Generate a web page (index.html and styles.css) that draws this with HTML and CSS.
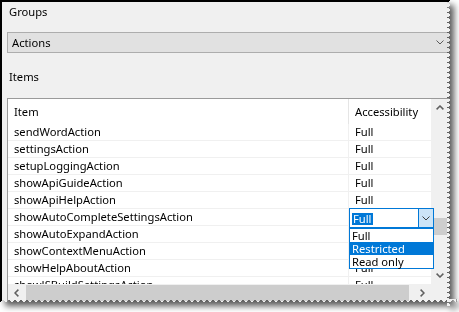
FILE: index.html
```html
<!DOCTYPE html>
<html>
<head>
<meta charset="utf-8">
<title>Groups</title>
<link rel="stylesheet" href="styles.css">
</head>
<body>
<div class="shot">
  <div class="win">
    <div class="label">Groups</div>
    <div class="combo">
      <span class="combo-text">Actions</span>
      <svg class="chev" width="8" height="5" viewBox="0 0 8 5"><path d="M0.5 0.5L4 4L7.5 0.5" fill="none" stroke="#5a5a5a" stroke-width="1"/></svg>
    </div>
    <div class="label items-label">Items</div>
    <div class="listbox">
      <div class="view">
        <div class="hdr"><div class="c1">Item</div><div class="c2">Accessibility</div></div>
        <div class="row"><div class="c1">sendWordAction</div><div class="c2">Full</div></div>
        <div class="row"><div class="c1">settingsAction</div><div class="c2">Full</div></div>
        <div class="row"><div class="c1">setupLoggingAction</div><div class="c2">Full</div></div>
        <div class="row"><div class="c1">showApiGuideAction</div><div class="c2">Full</div></div>
        <div class="row"><div class="c1">showApiHelpAction</div><div class="c2">Full</div></div>
        <div class="row"><div class="c1">showAutoCompleteSettingsAction</div><div class="c2"></div></div>
        <div class="row"><div class="c1">showAutoExpandAction</div><div class="c2"></div></div>
        <div class="row"><div class="c1">showContextMenuAction</div><div class="c2"></div></div>
        <div class="row"><div class="c1">showHelpAboutAction</div><div class="c2">Full</div></div>
        <div class="row"><div class="c1">showJSBuildSettingsAction</div><div class="c2">Full</div></div>
      </div>
      <div class="vscroll">
        <div class="sbtn"><svg width="8" height="5" viewBox="0 0 8 5"><path d="M0.6 4.4L4 1L7.4 4.4" fill="none" stroke="#606060" stroke-width="1.5"/></svg></div>
        <div class="vtrack"><div class="vthumb"></div></div>
        <div class="sbtn"><svg width="8" height="5" viewBox="0 0 8 5"><path d="M0.6 0.6L4 4L7.4 0.6" fill="none" stroke="#606060" stroke-width="1.5"/></svg></div>
      </div>
      <div class="hscroll">
        <div class="sbtn"><svg width="5" height="8" viewBox="0 0 5 8"><path d="M4.4 0.6L1 4L4.4 7.4" fill="none" stroke="#606060" stroke-width="1.5"/></svg></div>
        <div class="htrack"><div class="hthumb"></div></div>
        <div class="sbtn"><svg width="5" height="8" viewBox="0 0 5 8"><path d="M0.6 0.6L4 4L0.6 7.4" fill="none" stroke="#606060" stroke-width="1.5"/></svg></div>
      </div>
      <div class="corner"></div>
    </div>

    <div class="editor">
      <span class="ed-text"><span class="sel">Full</span></span>
      <span class="ed-btn"><svg width="8" height="5" viewBox="0 0 8 5"><path d="M0.5 0.5L4 4L7.5 0.5" fill="none" stroke="#404040" stroke-width="1"/></svg></span>
    </div>
    <div class="popup">
      <div class="opt">Full</div>
      <div class="opt hl">Restricted</div>
      <div class="opt">Read only</div>
    </div>
  </div>
</div>
</body>
</html>
```

FILE: styles.css
```css
html, body {
  margin: 0;
  padding: 0;
  background: #fff;
}
body {
  font-family: "Noto Sans", "Open Sans", sans-serif;
  font-size: 11.2px;
  color: #000;
}
.shot {
  width: 459px;
  height: 312px;
  filter: drop-shadow(5px 5px 3px rgba(0, 0, 0, 0.65));
}
.win {
  position: relative;
  box-sizing: border-box;
  width: 458px;
  height: 306px;
  overflow: hidden;
  background: #f0f0f0;
  border-top: 2px solid #000;
  border-left: 2px solid #000;
  padding: 2px 0 0 5px;
  -webkit-mask:
    linear-gradient(#000 0 0) 0 0 / 447px 299px no-repeat,
    conic-gradient(from 58deg at left, #0000 64deg, #000 0) 447px 0 / 4px 5px repeat-y,
    conic-gradient(from 135deg at top, #0000 90deg, #000 0) 0 299px / 6px 3px repeat-x;
  mask:
    linear-gradient(#000 0 0) 0 0 / 447px 299px no-repeat,
    conic-gradient(from 58deg at left, #0000 64deg, #000 0) 447px 0 / 4px 5px repeat-y,
    conic-gradient(from 135deg at top, #0000 90deg, #000 0) 0 299px / 6px 3px repeat-x;
}
.label {
  line-height: 16px;
  height: 16px;
  padding-left: 2px;
}
.combo {
  box-sizing: border-box;
  margin-top: 12px;
  width: 446px;
  height: 21px;
  border: 1px solid #adadad;
  background: #e1e1e1;
  display: flex;
  align-items: center;
  padding: 0 8px 0 4px;
}
.combo-text {
  flex: 1;
  line-height: 19px;
}
.chev {
  display: block;
}
.items-label {
  margin-top: 16px;
}
.listbox {
  margin-top: 13px;
  width: 450px;
  height: 220px;
  box-sizing: border-box;
  border: 1px solid #9a9a9a;
  display: grid;
  grid-template-columns: 423px 1fr;
  grid-template-rows: 185px 17px 1fr;
  background: #f0f0f0;
}
.view {
  background: #fff;
  overflow: hidden;
}
.hdr, .row {
  display: flex;
  box-sizing: border-box;
  line-height: 16px;
  white-space: nowrap;
}
.hdr {
  height: 25px;
}
.hdr .c1, .hdr .c2 {
  padding-top: 5px;
}
.hdr .c1 {
  border-right: 1px solid #e5e5e5;
}
.row {
  height: 17px;
  border-bottom: 1px solid #f0f0f0;
}
.c1 {
  box-sizing: border-box;
  width: 341px;
  padding-left: 6px;
  border-right: 1px solid #f0f0f0;
}
.c2 {
  flex: 1;
  padding-left: 6px;
}
.vscroll {
  display: flex;
  flex-direction: column;
  width: 17px;
}
.sbtn {
  width: 17px;
  height: 17px;
  display: flex;
  align-items: center;
  justify-content: center;
  flex: none;
}
.sbtn svg {
  display: block;
}
.vtrack {
  flex: 1;
}
.vthumb {
  margin: 102px 1px 0;
  height: 17px;
  background: #cdcdcd;
}
.hscroll {
  display: flex;
}
.htrack {
  flex: 1;
  display: flex;
  align-items: stretch;
}
.hthumb {
  margin: 1px 0 0 1px;
  width: 383px;
  background: #cdcdcd;
}
.corner {
  background: #f0f0f0;
}

/* in-place editor over the listview */
.editor {
  position: absolute;
  left: 347px;
  top: 206px;
  box-sizing: border-box;
  width: 85px;
  height: 20px;
  border: 1px solid #0078d7;
  background: #fff;
  display: flex;
}
.ed-text {
  flex: 1;
  padding: 2px 0 0 2px;
}
.sel {
  display: inline-block;
  height: 12px;
  line-height: 12px;
  padding: 0 1px;
  background: #0078d7;
  color: #fff;
}
.ed-btn {
  width: 14px;
  border-left: 1px solid #0078d7;
  background: #cce4f7;
  display: flex;
  align-items: center;
  justify-content: center;
}
.popup {
  position: absolute;
  left: 347px;
  top: 226px;
  box-sizing: border-box;
  width: 85px;
  height: 41px;
  border: 1px solid #0078d7;
  background: #fff;
}
.opt {
  height: 13px;
  line-height: 13px;
  padding-left: 2px;
  white-space: nowrap;
}
.opt.hl {
  background: #0078d7;
  color: #fff;
}
```
